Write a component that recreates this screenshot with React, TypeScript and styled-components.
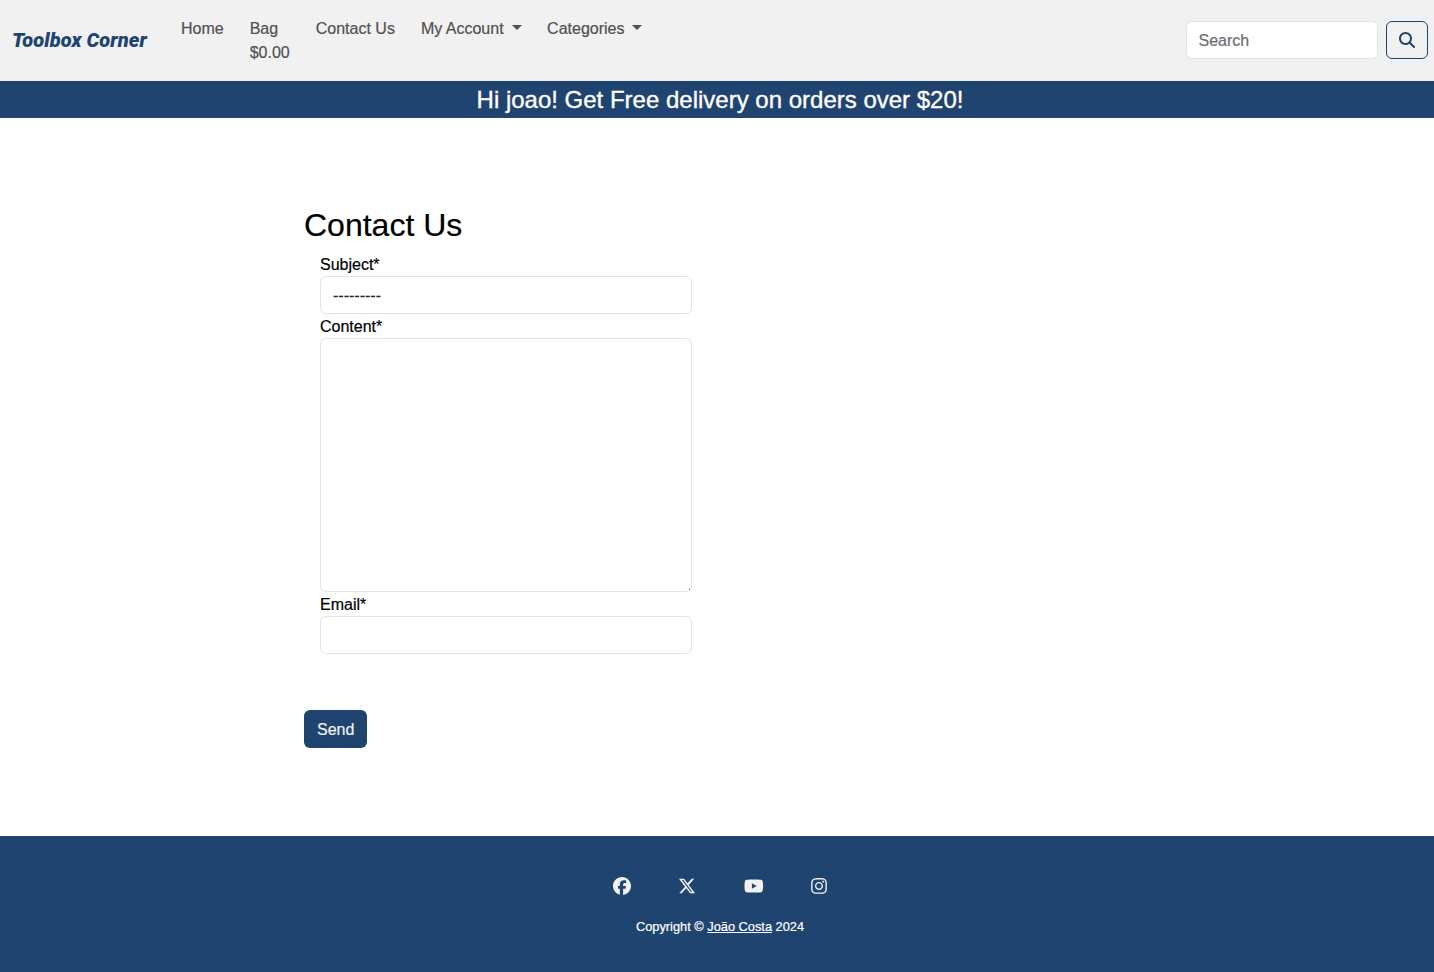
import React from "react";
import styled, { createGlobalStyle } from "styled-components";
import { FaFacebook, FaInstagram, FaMagnifyingGlass, FaXTwitter, FaYoutube } from "react-icons/fa6";

const navy = "#204470";
const light = "#f1f1f1";

const GlobalStyle = createGlobalStyle`
  *, *::before, *::after { box-sizing: border-box; }
  body {
    margin: 0;
    background: #fff;
    color: #000;
    font: 400 16px/24px "Liberation Sans", Arial, sans-serif;
    -webkit-text-stroke: 0.2px;
    overflow-x: hidden;
  }
`;

const Page = styled.div`
  display: flex;
  flex-direction: column;
  min-height: 972px;
`;

const Navbar = styled.header`
  display: flex;
  align-items: center;
  height: 81px;
  padding: 0 6px 0 12px;
  background: ${light};
  border-bottom: 1px solid #e9efef;
`;

const Brand = styled.a`
  width: 169px;
  flex: none;
  color: ${navy};
  font: italic 900 20px/30px Roboto, sans-serif;
  letter-spacing: 0.08px;
  text-decoration: none;
  white-space: nowrap;
  -webkit-text-stroke: 0;
`;

const NavList = styled.nav`
  display: flex;
  align-items: flex-start;
  align-self: stretch;
  gap: 26px;
  padding-top: 17px;
  flex: 1;
`;

const NavLink = styled.a<{ $dropdown?: boolean }>`
  color: #505050;
  text-decoration: none;
  white-space: pre-line;

  &::after {
    content: "";
    display: ${(p) => (p.$dropdown ? "inline-block" : "none")};
    margin-left: 8px;
    margin-right: -0.5px;
    vertical-align: 4px;
    border-top: 5px solid;
    border-right: 5px solid transparent;
    border-left: 5px solid transparent;
  }
`;

const SearchForm = styled.form`
  display: flex;
  gap: 8px;
`;

const control = `
  display: block;
  border: 1px solid #e2e4e7;
  border-radius: 6px;
  background: #fff;
  color: #212529;
  font: inherit;
  padding: 7px 12px 5px;
  margin: 0;
  outline: none;
`;

const SearchInput = styled.input`
  ${control}
  width: 192.5px;
  height: 38px;
  &::placeholder { color: #6b6d70; opacity: 1; }
`;

const SearchButton = styled.button`
  display: grid;
  place-items: center;
  width: 42px;
  height: 38px;
  padding: 0;
  border: 1px solid ${navy};
  border-radius: 6px;
  background: transparent;
  color: ${navy};
  font-size: 16px;
`;

const Banner = styled.div`
  height: 37px;
  padding-left: 6px;
  background: ${navy};
  color: #fff;
  font-size: 24px;
  line-height: 37px;
  text-align: center;
  -webkit-text-stroke: 0.35px;
`;

const Main = styled.main`
  flex: 1;
  padding: 88px 0 0 304px;
`;

const Title = styled.h2`
  margin: 0 0 8px;
  font-size: 32px;
  font-weight: 400;
  line-height: 38px;
`;

const Fields = styled.div`
  width: 372px;
  margin: 0 0 56px 16px;
`;

const Label = styled.label`
  display: block;
  height: 24px;
  padding-top: 1px;
`;

const Select = styled.select`
  ${control}
  width: 100%;
  height: 38px;
  appearance: none;
`;

const TextInput = styled.input`
  ${control}
  width: 100%;
  height: 38px;
`;

const TextArea = styled.textarea`
  ${control}
  width: 100%;
  height: 254px;
  resize: vertical;

  &::-webkit-resizer {
    background: linear-gradient(#555, #555) right 1px bottom 1px / 1px 1px no-repeat;
  }
`;

const SendButton = styled.button`
  width: 63.4px;
  height: 38px;
  padding: 2px 0 0;
  border: 0;
  border-radius: 6px;
  background: ${navy};
  color: ${light};
  font: inherit;
`;

const Footer = styled.footer`
  display: flex;
  flex-direction: column;
  align-items: center;
  gap: 20.5px;
  height: 136px;
  padding: 39.5px 0 0 6px;
  background: ${navy};
  color: ${light};
`;

const SocialLinks = styled.div`
  display: flex;
  gap: 47.6px;
  height: 21px;
  align-items: center;
`;

const SocialLink = styled.a<{ $width: number }>`
  display: flex;
  width: ${(p) => p.$width}px;
  color: inherit;
  svg { width: 100%; height: 18px; }
`;

const Copyright = styled.p`
  margin: 0;
  font-size: 12.8px;
  line-height: 20px;
  color: #fff;
  a { color: inherit; }
`;

export default function App() {
  return (
    <Page>
      <GlobalStyle />
      <Navbar>
        <Brand>Toolbox Corner</Brand>
        <NavList>
          <NavLink>Home</NavLink>
          <NavLink>{"Bag\n$0.00"}</NavLink>
          <NavLink>Contact Us</NavLink>
          <NavLink $dropdown>My Account</NavLink>
          <NavLink $dropdown>Categories</NavLink>
        </NavList>
        <SearchForm>
          <SearchInput placeholder="Search" />
          <SearchButton type="button" aria-label="Search"><FaMagnifyingGlass /></SearchButton>
        </SearchForm>
      </Navbar>
      <Banner>Hi joao! Get Free delivery on orders over $20!</Banner>
      <Main>
        <Title>Contact Us</Title>
        <Fields>
          <Label htmlFor="subject">Subject*</Label>
          <Select id="subject"><option>---------</option></Select>
          <Label htmlFor="content">Content*</Label>
          <TextArea id="content" />
          <Label htmlFor="email">Email*</Label>
          <TextInput id="email" type="email" />
        </Fields>
        <SendButton type="button">Send</SendButton>
      </Main>
      <Footer>
        <SocialLinks>
          <SocialLink $width={18} aria-label="Facebook"><FaFacebook /></SocialLink>
          <SocialLink $width={18} aria-label="X"><FaXTwitter /></SocialLink>
          <SocialLink $width={19.6} aria-label="YouTube"><FaYoutube /></SocialLink>
          <SocialLink $width={16} aria-label="Instagram"><FaInstagram /></SocialLink>
        </SocialLinks>
        <Copyright>Copyright © <a href="#">João Costa</a> 2024</Copyright>
      </Footer>
    </Page>
  );
}
